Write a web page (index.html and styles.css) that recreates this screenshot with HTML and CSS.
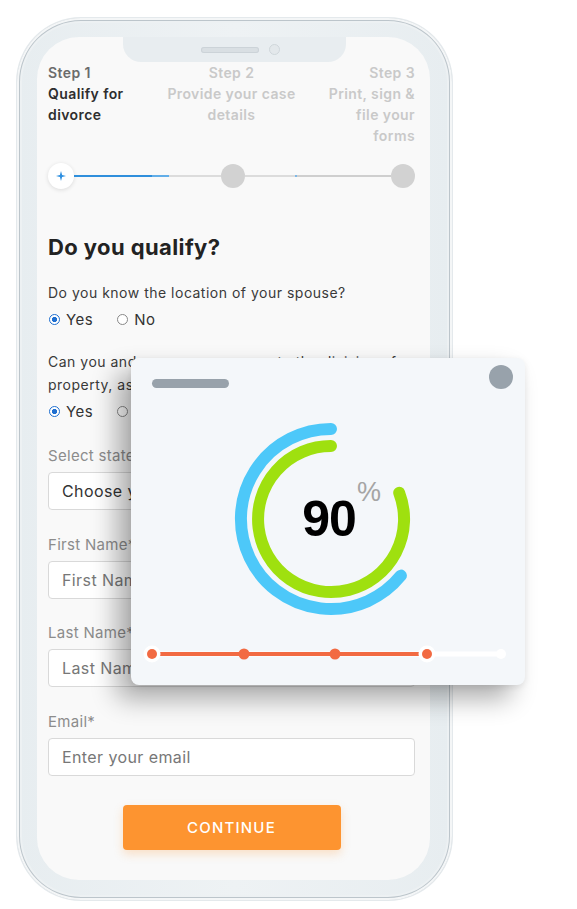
FILE: index.html
```html
<!DOCTYPE html>
<html lang="en">
<head>
<meta charset="utf-8">
<title>Do you qualify?</title>
<link rel="stylesheet" href="styles.css">
</head>
<body>
<div class="stage">
  <div class="phone">
    <div class="screen">
      <div class="notch"><span class="speaker"></span><span class="camera"></span></div>
      <div class="content">
        <div class="steps">
          <div class="step step-1"><div class="step-no">Step 1</div><div class="step-title">Qualify for<br>divorce</div></div>
          <div class="step step-2"><div class="step-no">Step 2</div><div class="step-title">Provide your case<br>details</div></div>
          <div class="step step-3"><div class="step-no">Step 3</div><div class="step-title">Print, sign &amp;<br>file your<br>forms</div></div>
        </div>
        <div class="progress">
          <span class="dot dot-active"><svg width="10" height="10" viewBox="0 0 10 10"><path d="M5 0 L6.1 3.9 L10 5 L6.1 6.1 L5 10 L3.9 6.1 L0 5 L3.9 3.9 Z" fill="#2d8fe0"/></svg></span>
          <span class="line line-1"></span>
          <span class="dot"></span>
          <span class="line line-2"></span>
          <span class="dot"></span>
        </div>
        <h1 class="title">Do you qualify?</h1>
        <p class="question">Do you know the location of your spouse?</p>
        <div class="radios">
          <span class="radio checked">Yes</span>
          <span class="radio">No</span>
        </div>
        <p class="question q2">Can you and your spouse agree to the division of property, assets and debts?</p>
        <div class="radios">
          <span class="radio checked">Yes</span>
          <span class="radio">No</span>
        </div>
        <div class="field first-field">
          <label class="label">Select state</label>
          <div class="input value">Choose your state</div>
        </div>
        <div class="field">
          <label class="label">First Name*</label>
          <div class="input">First Name</div>
        </div>
        <div class="field">
          <label class="label">Last Name*</label>
          <div class="input">Last Name</div>
        </div>
        <div class="field">
          <label class="label">Email*</label>
          <div class="input">Enter your email</div>
        </div>
        <div class="actions"><button class="btn">CONTINUE</button></div>
      </div>
    </div>
  </div>

  <div class="card">
    <div class="card-top"><span class="card-bar"></span><span class="card-circle"></span></div>
    <div class="gauge">
      <svg class="gauge-svg" width="220" height="220" viewBox="90 51 220 220">
        <path d="M269.9 217.6 A90 90 0 1 1 200 71" fill="none" stroke="#4dc8f9" stroke-width="12" stroke-linecap="round"/>
        <path d="M268.2 134.8 A73 73 0 1 1 200 88" fill="none" stroke="#9fe00f" stroke-width="12" stroke-linecap="round"/>
      </svg>
      <span class="gauge-num">90</span>
      <span class="gauge-pct">%</span>
    </div>
    <div class="slider">
      <svg width="394" height="24" viewBox="0 284 394 24">
        <line x1="21" y1="296" x2="370" y2="296" stroke="#ffffff" stroke-width="5" stroke-linecap="round"/>
        <line x1="21" y1="296" x2="296" y2="296" stroke="#f26a42" stroke-width="4"/>
        <circle cx="370" cy="296" r="5" fill="#ffffff"/>
        <circle cx="21" cy="296" r="8.5" fill="#ffffff"/>
        <circle cx="21" cy="296" r="5" fill="#f26a42"/>
        <circle cx="113" cy="296" r="5.5" fill="#f26a42"/>
        <circle cx="204" cy="296" r="5.5" fill="#f26a42"/>
        <circle cx="296" cy="296" r="8.5" fill="#ffffff"/>
        <circle cx="296" cy="296" r="5" fill="#f26a42"/>
      </svg>
    </div>
  </div>
</div>
</body>
</html>
```

FILE: styles.css
```css
* { box-sizing: border-box; }
html, body { margin: 0; padding: 0; background: #ffffff; }
body { font-family: "Inter", "Liberation Sans", sans-serif; color: #333; }

.stage { position: relative; width: 577px; height: 909px; padding: 18px 0 0 17px; }

.phone {
  width: 435px;
  height: 882px;
  border-radius: 64px;
  background: linear-gradient(90deg, #e7edf0 0%, #eef2f4 50%, #e7edf0 100%);
  box-shadow: 0 0 0 1px #e4e9ec, inset 0 0 0 2px #f4f6f7, inset 0 0 0 3px #bcc5cb, inset 0 0 0 5px #edf1f3;
  padding: 19px 22px 20px 20px;
}

.screen {
  position: relative;
  width: 393px;
  height: 843px;
  border-radius: 42px;
  background: #f9f9f9;
  overflow: hidden;
}

.notch {
  position: absolute;
  top: 0;
  left: 86px;
  width: 223px;
  height: 25px;
  background: #e8edf0;
  border-radius: 0 0 18px 18px;
  display: flex;
  align-items: center;
  justify-content: center;
  gap: 10px;
  padding-left: 12px;
}
.speaker { width: 58px; height: 6px; border-radius: 3px; background: #d9dfe3; box-shadow: inset 0 0 0 1px #ccd3d8; }
.camera { width: 11px; height: 11px; border-radius: 50%; border: 1px solid #cfd6da; background: #e3e8eb; }

.content { padding: 25px 15px 0 11px; display: flex; flex-direction: column; letter-spacing: 0.5px; }

.steps {
  display: grid;
  grid-template-columns: 1fr 1.3fr 1fr;
  font-size: 14px;
  line-height: 21px;
  font-weight: 600;
  letter-spacing: 0.4px;
}
.step-1 .step-no { color: #6b6b6b; }
.step-1 .step-title { color: #2e2e2e; }
.step-2 { text-align: center; color: #c9c9c9; white-space: nowrap; }
.step-3 { text-align: right; color: #c9c9c9; white-space: nowrap; }

.progress { display: flex; align-items: center; margin-top: 17px; height: 26px; }
.dot { width: 24px; height: 24px; border-radius: 50%; background: #d2d2d2; flex: none; }
.dot-active {
  width: 26px; height: 26px; background: #fff;
  box-shadow: 0 1px 4px rgba(0,0,0,0.12);
  display: flex; align-items: center; justify-content: center;
}
.line { flex: 1; height: 2px; background: #dcdcdc; }
.line-1 { background: linear-gradient(90deg, #2f8fdc 0, #2f8fdc 78px, #62aee8 78px, #62aee8 95px, #dcdcdc 95px); }
.line-2 { background: linear-gradient(90deg, #dcdcdc 0, #dcdcdc 50px, #7fb8e6 50px, #7fb8e6 52px, #cfcfcf 52px); }

.title { margin: 44px 0 0; font-size: 22px; line-height: 28px; font-weight: 700; color: #222; letter-spacing: 0.4px; }

.question { margin: 20px 0 0; font-size: 14px; line-height: 23px; color: #3a3a3a; }
.q2 { margin-top: 20px; }

.radios { display: flex; gap: 24px; margin-top: 5px; font-size: 15px; line-height: 21px; color: #333; padding-left: 1px; }
.radio { display: inline-flex; align-items: center; gap: 6px; }
.radio::before {
  content: ""; width: 11px; height: 11px; border-radius: 50%;
  border: 1.5px solid #888; background: #fff; box-sizing: border-box;
}
.radio.checked::before { border-color: #1f6fd0; background: radial-gradient(circle, #1f6fd0 0 2.4px, #fff 2.9px); }

.field { display: flex; flex-direction: column; margin-top: 23.7px; }
.first-field { margin-top: 23px; }
.label { font-size: 15px; line-height: 21px; color: #8c8c8c; letter-spacing: 0.3px; }
.input {
  margin-top: 6px; height: 38px; background: #fff;
  border: 1px solid #d9d9d9; border-radius: 4px;
  padding: 0 13px; display: flex; align-items: center;
  font-size: 16px; color: #777; letter-spacing: 0.4px;
}
.input.value { color: #333; }

.actions { display: flex; justify-content: center; margin-top: 29px; }
.btn {
  width: 218px; height: 45px; border: 0; border-radius: 4px;
  background: #fd9430; color: #fff;
  font-family: "Inter", "Liberation Sans", sans-serif; font-size: 15px; font-weight: 500; letter-spacing: 1.2px;
  box-shadow: 0 4px 10px rgba(253,148,48,0.25);
}

/* floating card */
.card {
  position: absolute;
  left: 131px; top: 358px;
  width: 394px; height: 327px;
  background: #f4f7fa;
  border-radius: 8px;
  box-shadow: -14px 14px 26px rgba(0,0,0,0.32), 0 2px 6px rgba(0,0,0,0.08);
  display: flex; flex-direction: column;
}
.card-top { display: flex; justify-content: space-between; align-items: flex-start; padding: 7px 12px 0 21px; height: 51px; }
.card-bar { margin-top: 14px; width: 77px; height: 9px; border-radius: 5px; background: #98a2ab; }
.card-circle { width: 24px; height: 24px; border-radius: 50%; background: #98a2ab; }

.gauge { position: relative; width: 220px; height: 220px; margin-left: 90px; }
.gauge-svg { display: block; }
.gauge-num {
  position: absolute; left: 66px; top: 82px; width: 84px; text-align: center;
  font-family: "Liberation Sans", sans-serif; font-weight: 700; font-size: 50px; line-height: 56px; color: #000;
  letter-spacing: -1px;
}
.gauge-pct {
  position: absolute; left: 136px; top: 68px;
  font-family: "Liberation Sans", sans-serif; font-size: 27px; line-height: 30px; color: #a5a5a5;
}

.slider { margin-top: 13px; height: 24px; }
.slider svg { display: block; }
```
